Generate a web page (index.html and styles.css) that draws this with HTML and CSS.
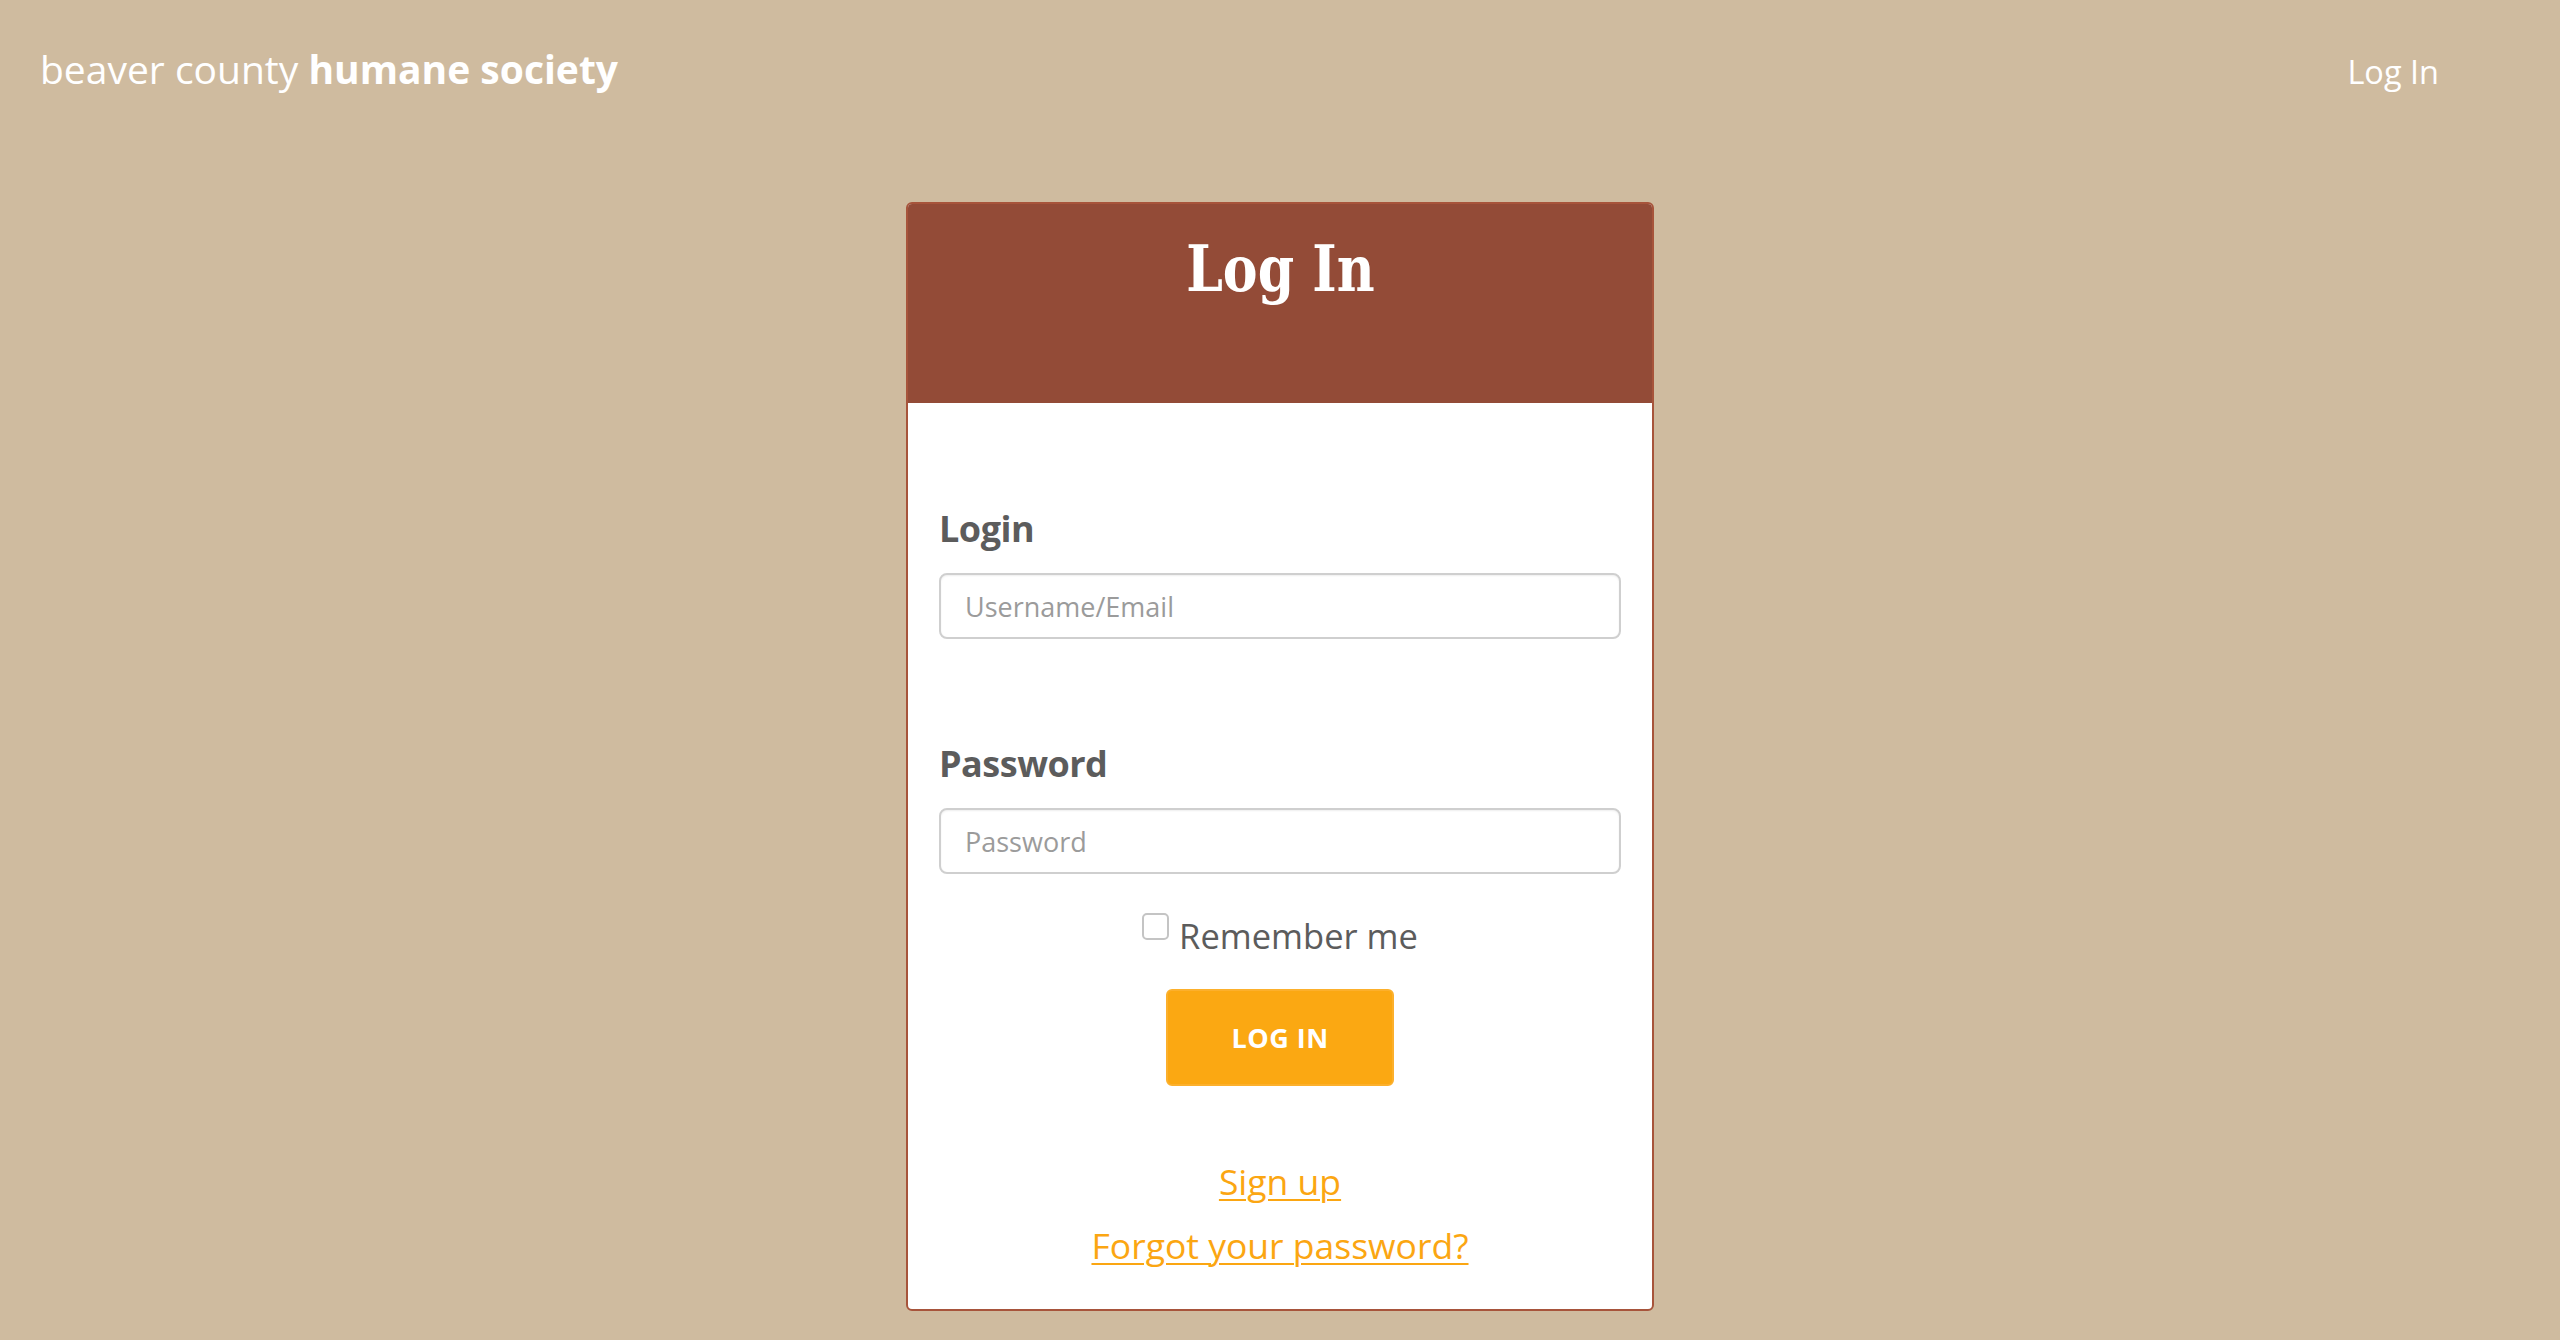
FILE: index.html
```html
<!DOCTYPE html>
<html lang="en">
<head>
<meta charset="utf-8">
<title>Log In - beaver county humane society</title>
<link rel="stylesheet" href="styles.css">
</head>
<body>
<header class="topbar">
  <a class="brand" href="#">beaver county <strong>humane society</strong></a>
  <nav class="nav"><a class="nav-link" href="#">Log In</a></nav>
</header>
<main class="main">
  <section class="card">
    <div class="card-head">
      <h1 class="card-title"><span class="card-title-text">Log In</span></h1>
    </div>
    <form class="card-body">
      <label class="field-label" for="login">Login</label>
      <input class="field-input" id="login" type="text" placeholder="Username/Email">
      <label class="field-label field-label-second" for="password">Password</label>
      <input class="field-input" id="password" type="password" placeholder="Password">
      <label class="remember">
        <input class="remember-box" type="checkbox">
        <span class="remember-text">Remember me</span>
      </label>
      <div class="actions">
        <button class="btn" type="button">LOG IN</button>
      </div>
      <div class="links">
        <a class="link" href="#">Sign up</a>
        <a class="link" href="#">Forgot your password?</a>
      </div>
    </form>
  </section>
</main>
</body>
</html>
```

FILE: styles.css
```css
* { box-sizing: border-box; }

html, body {
  margin: 0;
  padding: 0;
}

body {
  background: #cfbb9f;
  font-family: "Open Sans", "Noto Sans", sans-serif;
  min-height: 1340px;
}

.topbar {
  display: flex;
  justify-content: space-between;
  align-items: baseline;
  height: 96px;
  padding: 42px 121px 0 40px;
}

.brand {
  color: #ffffff;
  text-decoration: none;
  font-size: 39px;
  font-weight: 400;
  line-height: normal;
}

.brand strong {
  font-weight: 700;
}

.nav-link {
  color: #ffffff;
  text-decoration: none;
  font-size: 32.5px;
}

.main {
  display: flex;
  justify-content: center;
  padding-top: 106px;
}

.card {
  width: 748px;
  height: 1109px;
  background: #ffffff;
  border: 2px solid #a7543b;
  border-radius: 6px;
  overflow: hidden;
}

.card-head {
  height: 199px;
  background: #934b37;
  text-align: center;
}

.card-title {
  margin: 0;
  padding-top: 34px;
  font-family: "DejaVu Serif", serif;
  font-stretch: condensed;
  font-weight: 700;
  font-size: 63px;
  line-height: 1;
  color: #ffffff;
}

.card-title-text {
  display: inline-block;
  transform: scaleX(0.92);
}

.card-body {
  display: flex;
  flex-direction: column;
  padding: 101px 31px 0 31px;
  margin: 0;
}

.field-label {
  font-size: 36px;
  font-weight: 700;
  color: #5c5c5c;
  line-height: normal;
  letter-spacing: -0.5px;
}

.field-label-second {
  margin-top: 100px;
}

.field-input {
  margin-top: 20px;
  height: 66px;
  width: 100%;
  border: 2px solid #cfcfcf;
  border-radius: 8px;
  box-shadow: inset 0 1px 2px rgba(0, 0, 0, 0.07);
  padding: 0 24px;
  font-family: "Open Sans", sans-serif;
  font-size: 27px;
  color: #555;
  background: #fff;
  outline: none;
}

.field-input::placeholder {
  color: #9b9b9b;
}

.remember {
  display: flex;
  justify-content: center;
  align-items: flex-start;
  gap: 10px;
  margin-top: 38px;
}

.remember-box {
  appearance: none;
  -webkit-appearance: none;
  margin: 1px 0 0 0;
  width: 27px;
  height: 27px;
  border: 2px solid #c4c4c4;
  border-radius: 5px;
  background: #fff;
}

.remember-text {
  font-size: 34.5px;
  color: #5c5c5c;
  line-height: normal;
}

.actions {
  display: flex;
  justify-content: center;
  margin-top: 30px;
}

.btn {
  width: 228px;
  height: 97px;
  background: #fba812;
  border: 2px solid #fcb02c;
  border-radius: 6px;
  color: #ffffff;
  font-family: "Open Sans", sans-serif;
  font-weight: 700;
  font-size: 27px;
  letter-spacing: 0.5px;
  padding: 0;
}

.links {
  display: flex;
  flex-direction: column;
  align-items: center;
  margin-top: 63px;
}

.link {
  font-size: 35.5px;
  line-height: 64px;
  color: #fba612;
  text-decoration: underline;
  text-decoration-thickness: 2px;
  text-underline-offset: 4px;
}
```
